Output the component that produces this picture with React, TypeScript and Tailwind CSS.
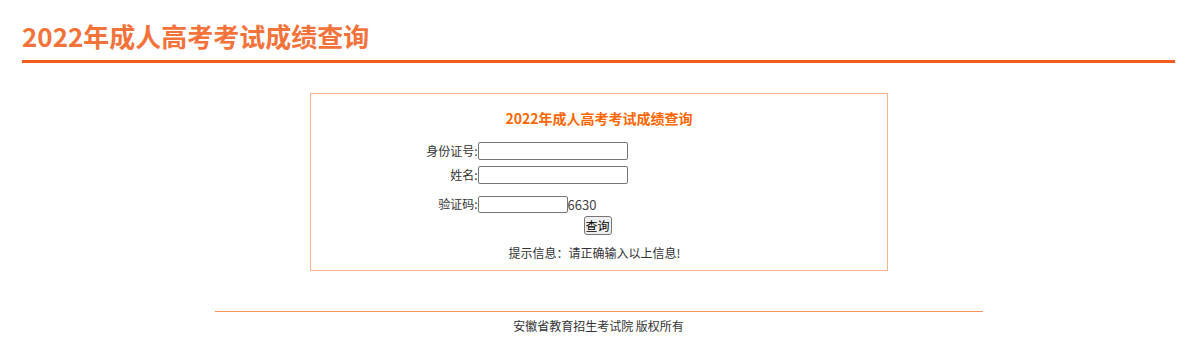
import React from 'react';

const font = 'font-["Noto_Sans_CJK_SC","Microsoft_YaHei",sans-serif]';

export default function App() {
  return (
    <div className={`min-h-[346px] bg-white text-[#333] ${font}`}>
      {/* Page header */}
      <header className="mx-[22px] pt-[18px] pb-[6px] border-b-[3px] border-[#f25c1c]">
        <h1 className="text-[26px] leading-[36px] font-bold text-[#f4733a]">2022年成人高考考试成绩查询</h1>
      </header>

      {/* Query box */}
      <div className="w-[578px] mx-auto mt-[30px] border border-[#f9b28b] pt-[14px] pb-[7px]">
        <div className="text-center text-[14px] leading-[20px] font-bold text-[#ff6600] pl-[1px]">
          2022年成人高考考试成绩查询
        </div>

        <div className="mt-[14px] flex items-center">
          <span className="w-[167px] text-right text-[12px] leading-[18px]">身份证号:</span>
          <input className="w-[150px] h-[18px] border border-[#767676] rounded-[2px] bg-white" />
        </div>
        <div className="mt-[6px] flex items-center">
          <span className="w-[167px] text-right text-[12px] leading-[18px]">姓名:</span>
          <input className="w-[150px] h-[18px] border border-[#767676] rounded-[2px] bg-white" />
        </div>
        <div className="mt-[11px] flex items-center">
          <span className="w-[167px] text-right text-[12px] leading-[18px]">验证码:</span>
          <input className="w-[90px] h-[17px] border border-[#767676] rounded-[2px] bg-white" />
          <span className="text-[13px] leading-[17px] text-[#444]">6630</span>
        </div>
        <div className="mt-[3px] flex">
          <button className="ml-[273px] w-[28px] h-[19px] border border-[#767676] rounded-[3px] bg-[#efefef] text-[12px] leading-[16px] text-black">
            查询
          </button>
        </div>

        <div className="mt-[8px] text-center text-[12px] leading-[20px] pr-[8px]">
          提示信息：请正确输入以上信息!
        </div>
      </div>

      {/* Footer */}
      <footer className="w-[768px] mx-auto mt-[40px] border-t border-[#f7935e] pt-[4px] text-center text-[12px] leading-[20px]">
        安徽省教育招生考试院 版权所有
      </footer>
    </div>
  );
}
